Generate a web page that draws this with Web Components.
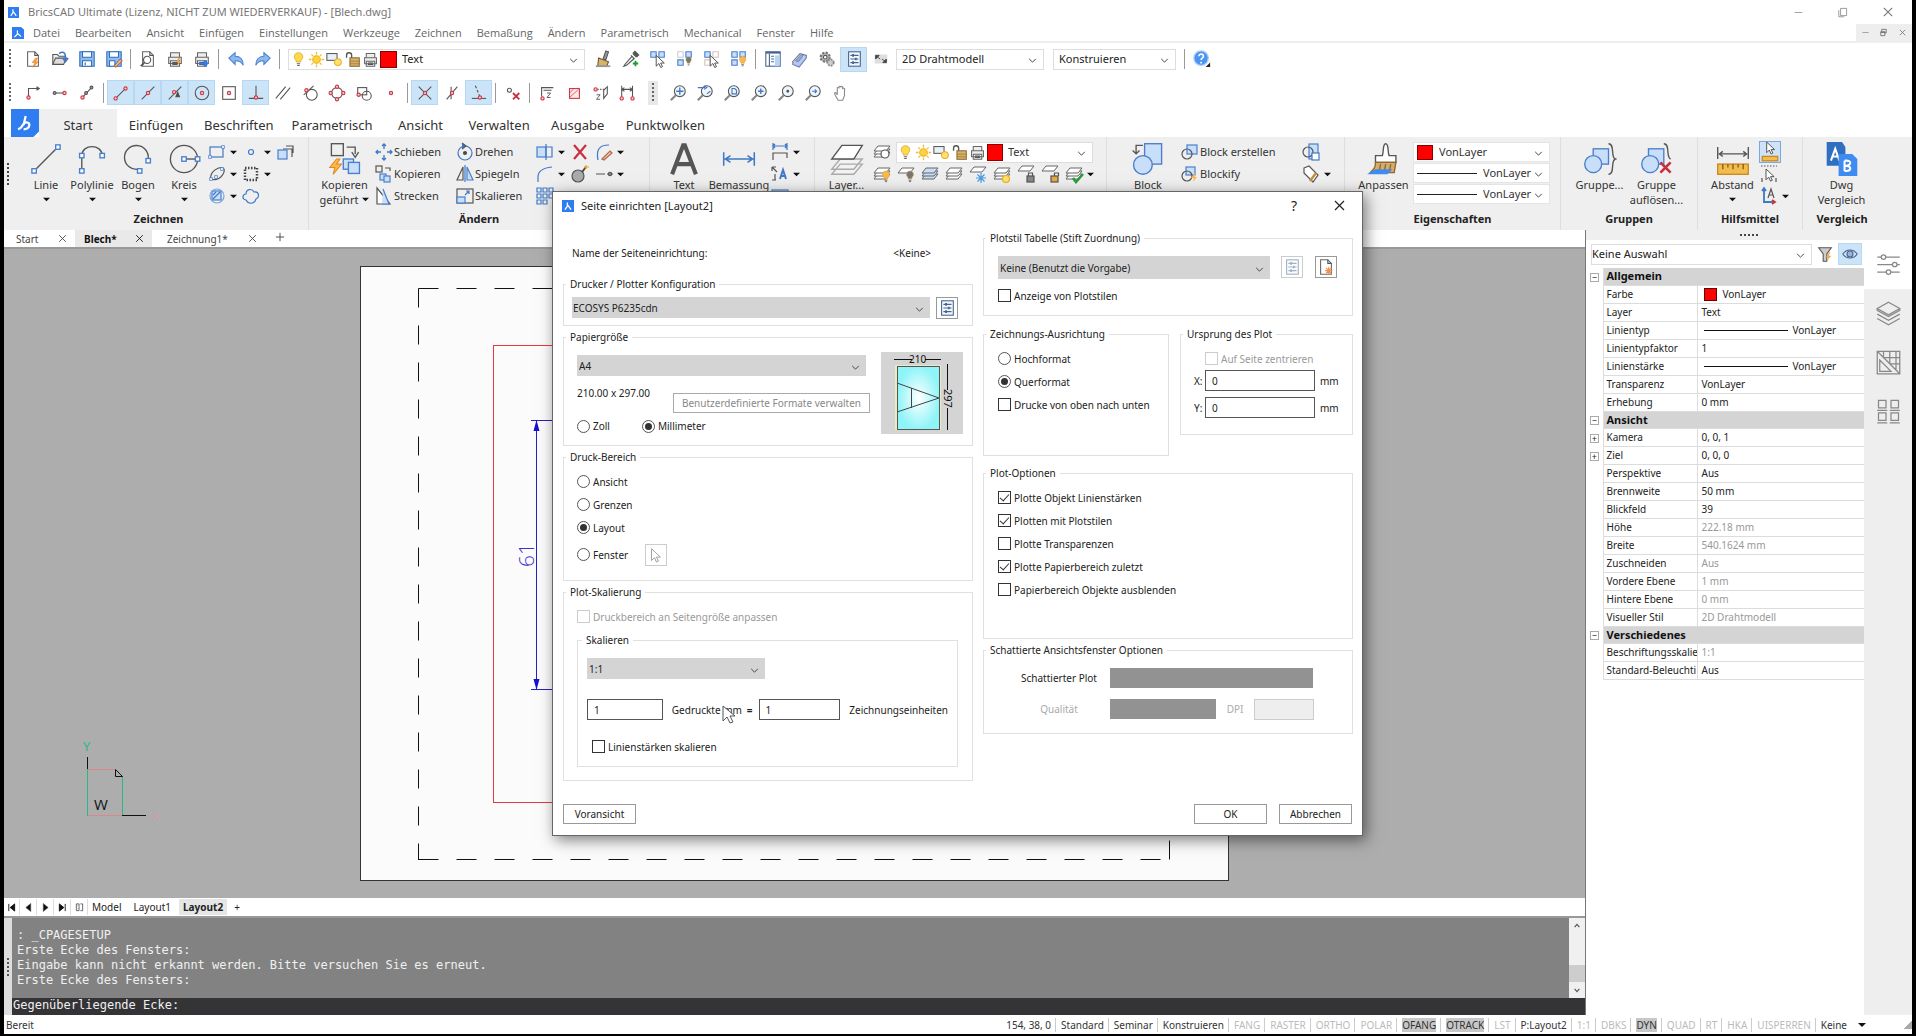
<!DOCTYPE html>
<html lang="de">
<head>
<meta charset="utf-8">
<title>BricsCAD Ultimate - [Blech.dwg]</title>
<style>
html,body{margin:0;height:100%;background:#000;overflow:hidden}
body{font:10px/14px "Noto Sans","Open Sans",sans-serif;color:#222}
</style>
</head>
<body>
<cad-app></cad-app>
<script>
/* ---------- icon set, drawn on a 20 x 20 grid ---------- */
const N=(x,y,r=1.8)=>`<circle cx="${x}" cy="${y}" r="${r}" fill="#f7d0d3" stroke="#cf3a48" stroke-width="1.3"/>`;
const NG=(x,y)=>`<circle cx="${x}" cy="${y}" r="1.6" fill="#999" stroke="#555"/>`;
const Q=(x,y)=>`<rect x="${x-1.3}" y="${y-1.3}" width="2.6" height="2.6" fill="#fff" stroke="#4a7fcc" stroke-width=".8"/>`;
const P=(d,a='')=>`<path d="${d}" ${a}/>`;
const B='stroke="#3f78c6"',BF='stroke="#4a7fcc" fill="#c9def8"';
const BULB=(x,y,c='#ffd94a',k=1)=>`<g transform="translate(${x} ${y}) scale(${k})"><path d="M0-7c-3 0-5 2-5 5 0 2.500 2.500 3.500 2.500 6h5C2.500 1.500 5 .5 5-2c0-3-2-5-5-5z" fill="${c}" stroke="#c9a227" stroke-width=".8"/><path d="M-2 6h4M-1.500 8h3" stroke="#666" stroke-width="1.300"/></g>`;
const SHEET=(y,f='#fff')=>`<path d="M6 ${y}h12l-4 5H2z" fill="${f}" stroke="#666" stroke-width="1"/>`;
const LAY=SHEET(10)+SHEET(7)+SHEET(4);
const PRN=P('M5 8V3h10v5M3 8h14v7H3zM5 12h10v6H5z','fill="#eee" stroke="#666"')+P('M7 14h6M7 16h6');
const MAG=i=>`<circle cx="12" cy="8" r="6" fill="#eef5fd"/>`+P('M7.500 12.500L2 18','stroke-width="2.400" stroke="#888"')+i;
const CUR=(x,y,s=1)=>`<path transform="translate(${x} ${y}) scale(${s})" d="M0 0v12l3-3 2 4.500 2-1L5 8.500h4z" fill="#fff" stroke="#444" stroke-width="1"/>`;
const LOGO='<rect width="20" height="20" fill="#2f7df0" stroke="none"/><path d="M9 4v6l-4 6M10 9l5 7" stroke="#fff" stroke-width="2.200" fill="none"/>';
const PAGE='<path d="M4 2h8l4 4v12H4z" fill="#fff" stroke="#666"/><path d="M12 2v4h4"/>';
const I={
logo:LOGO,
logotab:'<path d="M0 0h20v16l-4 4H0z" fill="#2f7df0" stroke="none"/><path d="M10.500 5L9 11.500M9 10.500c-1 2-2.500 3.500-4 4M9.500 10c2-1 4 0 3.500 2s-2.500 2.500-4 2.500" stroke="#fff" stroke-width="1.600"/>',
logodoc:'<path d="M0 0h15l5 4v16H0z" fill="#2f7df0" stroke="none"/><path d="M9 6v6l-5 5M10 11l5 5" stroke="#fff" stroke-width="2"/>',
new:PAGE+P('M13 9l-4 5h3l-2 5 6-6h-3l2-4z','fill="#f8a13c" stroke="#e07f1c" stroke-width=".6"'),
open:P('M2 16V5h5l2 2h7v3','fill="#eee"')+P('M2 16l3-7h12l-3 7z','fill="#ddd"')+P('M9 4c4-3 7-1 7 3v4M13 9l3 4 3-4','stroke="#3f78c6" stroke-width="1.800"'),
save:'<path d="M2 2h16v16H2z" fill="#8fbdf2" stroke="#2f6fc0"/><path d="M5 2h10v6H5z" fill="#fff" stroke="#2f6fc0"/><path d="M5 12h10v6H5z" fill="#fff" stroke="#2f6fc0"/><path d="M8 14v3"/>',
saveas:'<path d="M2 2h16v16H2z" fill="#8fbdf2" stroke="#2f6fc0"/><path d="M5 2h10v6H5z" fill="#fff" stroke="#2f6fc0"/><path d="M5 12h6v6H5z" fill="#fff" stroke="#2f6fc0"/><path d="M10 18l7-8 2 2-7 7z" fill="#ffd070" stroke="#a66"/>',
preview:PAGE+'<circle cx="9" cy="11" r="4" fill="#fff"/>'+P('M6 14l-4 4','stroke-width="2"'),
print:PRN+P('M14 9l-3 4h3l-2 5 5-6h-3l2-3z','fill="#f8a13c" stroke="none"'),
publish:PRN+P('M7 15h8M12 12l4 3-4 3','stroke="#2f7df0" stroke-width="2"'),
undo:P('M2 9l7-6v4c6 0 9 4 9 10-2-4-5-5-9-5v4z','fill="#8db8f0" stroke="#4a7fcc"'),
redo:P('M18 9l-7-6v4c-6 0-9 4-9 10 2-4 5-5 9-5v4z','fill="#8db8f0" stroke="#4a7fcc"'),
bulb:BULB(10,9),
sun:'<circle cx="10" cy="10" r="4.500" fill="#ffd23c" stroke="#e8b020"/>'+P('M10 1v3M10 16v3M1 10h3M16 10h3M4 4l2 2M14 14l2 2M16 4l-2 2M6 14l-2 2','stroke="#f2bc2c" stroke-width="1.500"'),
vpsun:'<rect x="1" y="3" width="12" height="8" fill="#e8f0fa"/><circle cx="14" cy="13" r="4" fill="#ffe070" stroke="#e8b020"/>',
unlock:P('M3 8V5c0-4 6-4 6 0v4','stroke-width="1.600"')+'<rect x="7" y="8" width="11" height="10" fill="#d8b068" stroke="#8a6a30"/>'+P('M7 12h11M7 15h11','stroke="#8a6a30" stroke-width=".7"'),
printer:PRN,
brush:P('M12 1l3 1-3 9-3-1z','fill="#999"')+P('M4 9l11 4-2 5H3z','fill="#d8b46a" stroke="#6b5730"')+P('M1 18h16','stroke="#999" stroke-width="2"'),
pipette:P('M12 4l4 4M10 6l4 4M11 7l-7 8-2 3 3-1 8-7','fill="#eee"')+P('M13 2l5 5','stroke-width="4" stroke="#555"')+P('M15 12v6M12 15h6','stroke="#1e9a32" stroke-width="2"'),
sel1:'<path d="M2 2h6v6H2zM11 2h6v6h-6z" '+BF+'/>'+CUR(8,6),
sel2:'<path d="M2 2h6v6H2z" stroke="#ccc"/><path d="M11 2h6v6h-6zM2 11h6v6H2z" '+BF+'/>'+BULB(14,12,'#777',.6),
sel3:'<path d="M2 2h6v6H2z" '+BF+'/><path d="M11 2h6v6h-6zM2 11h6v6H2z" stroke="#d9c0c0"/>'+CUR(8,6),
sel4:'<path d="M2 2h6v6H2zM11 2h6v6h-6zM2 11h6v6H2z" '+BF+'/>'+BULB(14,12,'#ffb648',.7),
table:'<rect x="2" y="2" width="16" height="16" fill="#fff" stroke="#47648f"/><path d="M2 3h16" stroke="#47648f" stroke-width="2"/><path d="M6 4v14M8 7h3M8 10h3M8 13h3" stroke="#47648f"/><path d="M12 6h5v12h-5z" fill="#b8d4f4" stroke="none"/>',
clip:P('M2 13l8-9 7 2-8 10z','fill="#f4f6fb" stroke="#777"')+P('M2 13v3l7 3 8-10V6','fill="#b9c8ea" stroke="#6a7fb8"')+P('M5 12l6-7 3 1-6 7z','fill="#8ea8e0" stroke="#5a73b8" stroke-width=".8"'),
gear:'<circle cx="8" cy="8" r="5" fill="#bbb" stroke="#777" stroke-width="2.500" stroke-dasharray="2.500 1.400"/><circle cx="8" cy="8" r="2" fill="#fff"/><circle cx="14" cy="14" r="3.500" fill="#ccc" stroke="#888" stroke-width="2" stroke-dasharray="2 1.200"/>',
props:'<rect x="4" y="2" width="13" height="16" fill="#f4f8fd" stroke="#47648f"/>'+P('M6 6h9M6 10h9M6 14h9','stroke="#47648f"')+P('M9 4.500v3M12 8.500v3M9 12.500v3','stroke="#47648f" stroke-width="2"'),
arrows:'<rect x="3" y="5" width="14" height="10" fill="#ddd" stroke="none"/>'+P('M4 6l4 0-4 4zM5 7l4 3','fill="#444" stroke="#444" stroke-width="1"')+P('M16 14h-4l4-4zM15 13l-4-3','fill="#444" stroke="#444" stroke-width="1"'),
help:'<circle cx="9" cy="9" r="8" fill="#4a94f2" stroke="#a9ccf8" stroke-width="1.500"/><path d="M6.500 7c0-3.500 5.500-3 5 0 0 2-2.500 2-2.500 4M9 13v2" stroke="#fff" stroke-width="1.800"/><path d="M14 19h5v-5z" fill="#222" stroke="none"/>',
e1:P('M5 14V5h11')+N(5,15)+P('M14 3l3 2-3 2','fill="#555"'), e2:P('M4 10h12')+NG(4,10)+N(15,10), e3:P('M4 16L15 4')+NG(15,4)+NG(9,10)+N(5,15),
s1:P('M4 16L16 4')+N(4,16)+N(15,5), s2:P('M3 17L17 3')+N(10,10), s3:P('M3 17L17 3')+N(9,9)+P('M13 9l-2 5h4z','fill="#444"'),
s4:'<circle cx="10" cy="10" r="7.500"/>'+N(10,10), s5:'<rect x="3" y="3" width="14" height="14"/>'+N(10,10), s6:P('M10 2v13M2 16h16')+N(10,15),
s7:P('M2 16L13 3M7 17L18 4'), s8:'<circle cx="12" cy="12" r="6"/>'+P('M3 12L14 2')+N(6,7), s9:'<circle cx="10" cy="10" r="6"/>'+N(10,3)+N(10,17)+N(3,10)+N(17,10),
s10:'<rect x="3" y="4" width="10" height="8"/><circle cx="13" cy="13" r="5"/>'+N(4,12), s11:N(10,10),
s12:P('M3 3l14 14M3 17L17 3')+N(10,10), s13:P('M4 17L16 3M9 3v14')+N(10,10), s14:P('M6 2l5 12','stroke-dasharray="3 2"')+P('M2 16h16')+N(11,15),
s15:'<circle cx="6" cy="7" r="2.200"/>'+P('M10 10l7 7M17 10l-7 7','stroke="#c8303e" stroke-width="2"'),
s16:P('M4 14V4h13M6 7h9')+'<path d="M10 10h4l-4 5h4" stroke-width="1"/>'+N(5,16), s17:'<rect x="5" y="5" width="11" height="11" stroke="#cf3a48" fill="#fbe6e8"/>'+P('M5 15l10-9M5 10l5-5','stroke="#cf3a48" stroke-width=".8"'),
s18:P('M6 6h9','stroke-dasharray="1.500 1.500"')+P('M17 3v8l-4 5V7z')+'<path d="M5 12h4l-4 5h4" stroke-width="1"/>'+N(4,6), s19:P('M3 2v13M15 2v13M3 6h12M6 4L3 6l3 2M12 4l3 2-3 2')+N(3,16)+N(15,16),
z1:MAG(P('M12 4v8M8 8h8',B+' stroke-width="1.500"')), z2:MAG(P('M2 4h8M9 2l3 2-3 2M12 11l4-3','stroke="#3f78c6"')), z3:MAG(P('M10 5h3l2 2v4h-5z',B)), z4:MAG(P('M12 5v6M9 8h6',B+' stroke-width="1.500"')), z5:MAG('<circle cx="12" cy="8" r="1" fill="#333"/>'), z6:MAG(P('M9 8h5M12 6l2 2-2 2',B)),
hand:P('M6 18c-2-3-4-6-4-8 1-1 2 0 3 2V4c1-1 2 0 2 1V3c1-1 2 0 2 1V3c1-1 2 0 2 1v1c1-1 3 0 2 2v6l-2 5z','transform="translate(2 0)" fill="#fff" stroke="#888"'),
line:P('M3 17L17 3')+Q(3,17)+Q(17,3), poly:P('M4 17V8c0-7 12-7 12 0')+Q(4,17)+Q(4,8)+Q(16,8), arc:P('M10 16A7 7 0 1 1 16 10')+Q(11,17)+Q(16,11), circ:'<circle cx="10" cy="10" r="8"/>'+P('M10 10h8')+Q(10,10)+Q(18,10),
rect:'<rect x="3" y="5" width="13" height="10" '+B+'/>'+Q(3,15)+Q(16,5), pt:'<circle cx="10" cy="10" r="2.500" '+B+'/>', ext:P('M8 7h9v8M11 4h7v7')+'<rect x="3" y="8" width="9" height="9" '+BF+'/>',
spl:P('M4 15C2 8 12 2 16 4s-2 14-12 11z')+Q(4,15)+Q(15,5)+Q(9,13), wipe:P('M4 4h12v12H4z','stroke-width="2.500" stroke-dasharray="1.500 1.500" stroke="#444"'), hatch:'<rect x="5" y="5" width="9" height="9" '+BF+'/><circle cx="10" cy="10" r="7" stroke="#7aa4dd"/>'+P('M6 13l7-7M6 9l3-3',B), cloud:P('M5 14c-5-1-3-6 0-6 0-5 6-6 8-2 5-1 6 5 2 7-2 6-8 5-10 1z',B),
copyg:'<rect x="2" y="1" width="7" height="7"/>'+P('M11 3h5v4M14 6l2 3 2-3')+P('M5 10l-4 5h3l-1 4 5-6H5l2-3z','fill="#ffb648" stroke="#e08a20" stroke-width=".6"')+'<rect x="9" y="10" width="6" height="6" '+BF+'/><rect x="12" y="12" width="6.500" height="6.500" '+BF+'/>',
move:P('M10 2v5M10 13v5M2 10h5M13 10h5M8 4l2-2 2 2M8 16l2 2 2-2M4 8l-2 2 2 2M16 8l2 2-2 2',B+' stroke-width="1.300"'), copy:'<rect x="2" y="2" width="6" height="6"/>'+P('M11 4h5v3')+'<rect x="6" y="10" width="6" height="6" '+BF+'/><rect x="10" y="12" width="6" height="6" '+BF+'/>', stretch:P('M3 2v16h13z','fill="#fff"')+P('M9 3l6 15H8','fill="#c9def8" stroke="#4a7fcc"'),
rot:'<circle cx="10" cy="11" r="7" '+B+'/>'+P('M7 1l4 3-4 3','fill="#3f78c6"')+'<circle cx="10" cy="11" r="1.500" fill="#444"/>', mir:P('M8 3v13H2z')+P('M12 3v13h6z',BF)+P('M10 1v17',B), scale:'<rect x="2" y="3" width="16" height="14"/><rect x="2" y="11" width="8" height="6" '+BF+'/>'+P('M10 9l4-4M11 5h3v3',B),
trim:'<rect x="2" y="5" width="9" height="10" '+BF+'/>'+P('M11 2v16M11 5h6v10h-6',B), del:P('M4 3l12 14M16 3L4 17','stroke="#c8303e" stroke-width="2.200"'), pedit:P('M4 18C2 8 5 3 15 3',B)+P('M8 17l8-8 2 2-8 7z','fill="#ffd070" stroke="#a66"'), fillet:P('M3 18V13c0-6 4-9 14-10',B), bomb:'<circle cx="8" cy="12" r="6" fill="#aaa"/>'+P('M12 8l4-5','stroke="#444" stroke-width="2"')+P('M14 3h5M16 1v4','stroke="#f0a020"'), brk:P('M2 10h9M13 10h2M17 10h2')+NG(16,10), arr:P('M2 2h4v4H2zM8 2h4v4H8zM14 2h4v4h-4zM2 8h4v4H2zM8 8h4v4H8zM14 8h4v4h-4zM2 14h4v4H2zM8 14h4v4H8z',B),
A:P('M3 19L9.500 2h1L17 19M5.500 13h9','stroke="#555" stroke-width="2.400"'), dim:P('M1 6v8M19 6v8M2 10h16M5 8l-3 2 3 2M15 8l3 2-3 2',B+' stroke-width=".9"'), dim2:P('M3 1v7M17 1v7M3 4h14M5 2L3 4l2 2M15 2l2 2-2 2',B)+P('M3 18v-7h14v5'), lead:P('M2 3h4M2 3v4M2 3l5 5M2 16h4M5 10v6')+P('M10 15l3-9 3 9M11 12h4','stroke="#3f78c6" stroke-width="2"'), tbl:'<rect x="2" y="4" width="16" height="12" '+BF+'/>',
layers:P('M6 10h13l-5 6H1zM6 13h13l-5 6H1z','stroke="#aaa" fill="#f2f2f2"')+P('M7 2h12l-5 8H1z','fill="#fff"'),
lay1:LAY+'<circle cx="13" cy="12" r="4" fill="#fff"/>', lay2:LAY+BULB(14,12,'#ffb648',.7), lay3:SHEET(4)+BULB(14,12,'#777',.7), lay4:SHEET(10,'#c9def8')+SHEET(7,'#c9def8')+SHEET(4,'#c9def8'), lay5:LAY, lay6:SHEET(3)+P('M13 9v10M8 14h10M9.500 10.500l7 7M16.500 10.500l-7 7','stroke="#4a9be6"'), lay7:LAY+'<circle cx="14" cy="15" r="3.500" fill="#ffe070" stroke="#e8b020"/>', lay8:SHEET(2)+'<rect x="11" y="12" width="7" height="6" fill="#888"/>'+P('M12.500 12v-3h4v3'), lay9:SHEET(2)+'<rect x="11" y="12" width="7" height="6" fill="#e8a840"/>'+P('M14.500 12v-3h4v3'), lay10:LAY+P('M9 14l3 4 7-8','stroke="#2f9a3c" stroke-width="2.600"'),
block:'<rect x="8" y="1" width="10" height="12" '+BF+'/><circle cx="7" cy="13.500" r="5.500" '+BF+'/>'+P('M7 2H3v5M1 5l2 2 2-2'), blk1:'<rect x="7" y="3" width="10" height="9" '+BF+'/><circle cx="7" cy="12" r="5"/>', blk2:'<rect x="6" y="3" width="9" height="8" '+BF+'/><circle cx="7" cy="12" r="5"/>'+P('M15 9l-4 5h3l-1 4 4-5h-2z','fill="#ffb648" stroke="none"'), blk3:'<rect x="8" y="2" width="9" height="15" '+BF+'/><circle cx="7" cy="10" r="5"/><rect x="11" y="11" width="7" height="7" fill="#fff" '+B+'/>', tag:P('M3 4l5-2 9 9-5 7-9-9z','fill="#fff"')+P('M9 17l6-8','stroke="#c89040" stroke-width="2.500"'),
bigbrush:P('M11 1c2 0 1 5 2 7h4v4H5V8h4c1-2 0-7 2-7z','fill="#fff"')+P('M5 12h12l-1 6H2c2-2 3-3 3-6z','fill="#d8ab68" stroke="#8a6a30"')+P('M7 18l1-5M10 18l1-5M13 18l1-5','stroke="#8a6a30" stroke-width=".8"')+P('M0 19h12l3-3H5z','fill="#3f8cf0" stroke="none"'),
grp:'<rect x="6" y="4" width="9" height="9" '+BF+'/><circle cx="6" cy="13" r="5" '+BF+'/>'+P('M15 1c4 0 1 8 4 9-3 1 0 9-4 9'), grpx:'<rect x="5" y="4" width="9" height="9" '+BF+'/><circle cx="6" cy="13" r="5" '+BF+'/>'+P('M14 1c4 0 1 8 4 9')+P('M12 12l6 6M18 12l-6 6','stroke="#c8303e" stroke-width="1.600"'),
dist:P('M1 3v7M19 3v7M2 7h16M4 5.500L2 7l2 1.500M16 5.500L18 7l-2 1.500','stroke-width=".8"')+'<rect x="1" y="13" width="18" height="6" fill="#f2bd4e" stroke="#c98a20"/>'+P('M4 13v3M7 13v2M10 13v3M13 13v2M16 13v3','stroke="#7a5510" stroke-width=".7"'), mcur:CUR(7,1,.8)+'<rect x="3" y="14" width="14" height="4" fill="#f2bd4e" stroke="#c98a20"/>', scur:P('M2 2h16','stroke-dasharray="1.500 1.500"')+CUR(7,5,.9)+P('M3 14v4M17 14v4'), ucs:P('M5 3v13h10M3 5l2-3 2 3',B+' stroke-width="1.800"')+P('M13 14l3 2-3 2','stroke="#c33" stroke-width="1.800"')+P('M9 12l3-9 3 9M10 9h4'),
dwg:'<path d="M1 0h9l2 3v11H1z" fill="#2f6fc0" stroke="none"/><path d="M3.500 11L6 4l2.500 7M4.500 8.500h3" stroke="#fff" stroke-width="1.200"/><path d="M8 7h8l3 3v10H8z" fill="#3f8cf0" stroke="none"/><path d="M11.500 11v6M11.500 11c5-.5 4 3 0 3 5 0 4 3.500 0 3" stroke="#fff" stroke-width="1.200"/>',
filter:P('M3 3h14l-5 7v8H8v-8z','fill="#ccc"')+P('M15 8l-4 5h3l-2 5 5-6h-3l2-4z','fill="#f8a13c" stroke="none"'), eye:P('M2 10c4-6 12-6 16 0-4 6-12 6-16 0z','stroke="#47648f"')+'<circle cx="10" cy="10" r="3.300" fill="#9db4d6" stroke="#47648f"/>',
sliders:P('M1 4h18M1 10h18M1 16h18','stroke="#888" stroke-width="1"')+'<g fill="#fff" stroke="#888" stroke-width="1"><circle cx="6" cy="4" r="1.800"/><circle cx="15" cy="10" r="1.800"/><circle cx="10" cy="16" r="1.800"/></g>',
stack:'<g stroke="#888" stroke-width="1"><path d="M1 14l9 5 9-5M1 10.500l9 5 9-5M10 1l9 5-9 5-9-5zM1 6v1.500l9 5 9-5V6"/></g>', plan:'<g stroke="#888" stroke-width="1"><path d="M1 1h18v18H1zM1 1l18 18M3 8v9h9zM6 1v5M11 1v10M16 1v15M6 6h13M11 11h8"/></g>', comps:'<g stroke="#888" stroke-width="1"><path d="M2 1h6v6H2zM12 1h6v6h-6zM2 11h6v6H2zM12 11h6v6h-6zM1 9h8M11 9h8M1 19h8M11 19h8"/></g>',
pageplus:PAGE+P('M13 10v8M9 14h8M10 11l6 6M16 11l-6 6','stroke="#f09050" stroke-width="1.300"'), curs:CUR(5,3,1.1),
chev:P('M4 7l6 6 6-6','stroke="#444" stroke-width="1.800"'), tri:P('M0 5h20L10 15z','fill="#111" stroke="none"'), x:P('M4 4l12 12M16 4L4 16','stroke="currentColor" stroke-width="1.600"'), minus:P('M3 10h14','stroke="currentColor"'), max:P('M6 4h10v12h-10zM3 7v11h9','stroke="currentColor"'), rest:P('M6 7V3h10v8h-4M4 8h9v9H4zM4 10h9','stroke="currentColor" stroke-width="1.800"'), plus:P('M10 3v14M3 10h14','stroke="currentColor" stroke-width="1.500"'),
first:P('M4 2v16M17 2v16l-10-8z','fill="#111" stroke="#111" stroke-width="2"'), prev:P('M15 1v18L4 10z','fill="#111"'), next:P('M5 1v18l11-9z','fill="#111"'), last:P('M16 2v16M3 2v16l10-8z','fill="#111" stroke="#111" stroke-width="2"'), list:P('M3 2h6v15H3zM12 2h5v15h-5M6 6h1M6 12h1','stroke="#333" stroke-width="1.600"'),
up:P('M4 13l6-7 6 7','stroke="#555" stroke-width="3"'), down:P('M4 7l6 7 6-7','stroke="#555" stroke-width="3"')
};
function def(name,css,html){customElements.define(name,class extends HTMLElement{
 constructor(){super();this.attachShadow({mode:'open'})}
 connectedCallback(){if(!this.shadowRoot.firstChild)this.shadowRoot.innerHTML=`<style>*,:host{box-sizing:border-box}button,input,select{font:inherit;color:inherit;margin:0}${css}</style>`+(typeof html==='function'?html(this):html)}
})}
const ic=(n,s=20)=>`<cad-icon n="${n}" s="${s}"></cad-icon>`;

def('cad-icon',':host{display:inline-block;flex:none;line-height:0}',e=>{const s=e.getAttribute('s')||20;return `<svg width="${s}" height="${s}" viewBox="0 0 20 20" fill="none" stroke="#555" stroke-width="${s>30?.8:s>24?1:1.2}" aria-hidden="true">${I[e.getAttribute('n')]||''}</svg>`});

/* tool button of the classic toolbars */
def('tool-button',':host{display:block;flex:none;width:27px;height:25px}button{width:100%;height:100%;border:0;padding:0;background:none;display:grid;place-items:center}:host([on]) button{background:#cce4f7;box-shadow:inset 0 0 0 1px #b7d8f2}',e=>`<button aria-label="${e.getAttribute('n')}">${ic(e.getAttribute('n'),e.getAttribute('s')||18)}</button>`);
def('tool-sep',':host{display:block;flex:none;width:7px;height:20px}div{width:1px;height:100%;margin:0 3px;background:#999}','<div></div>');
def('tool-grip',':host{display:block;flex:none;width:10px;height:24px}div{width:2px;height:20px;margin:2px 4px;background:repeating-linear-gradient(#666 0 2px,transparent 2px 4px)}','<div></div>');

/* drop-down box */
def('cad-select',`:host{display:block;position:relative;height:21px;background:#fff;border:1px solid #ddd}
.w{display:flex;align-items:center;height:100%;padding-left:var(--pl,5px)}slot{display:contents}
select{flex:1;min-width:0;width:0;height:100%;border:0;background:none;appearance:none;padding:0 var(--pr,20px) 0 var(--ti,0px);opacity:1;color:inherit}
cad-icon{position:absolute;right:5px;top:50%;margin-top:-4px;pointer-events:none}
:host([gray]){background:#d4d4d4;border:0}:host([dark]){background:#929292;border:0}:host([dark]) cad-icon{display:none}`,
e=>`<div class="w"><slot></slot><select aria-label="${e.getAttribute('label')}" ${e.hasAttribute('dark')?'disabled':''}><option>${e.getAttribute('value')||''}</option></select></div>${ic('chev',11)}`);

/* radio and tick box with label */
def('cad-check',`:host{display:flex;align-items:center;height:23px}label{display:flex;align-items:center;gap:3px;white-space:nowrap}
input{appearance:none;width:13px;height:13px;border:1px solid #333;background:#fff;display:grid;place-items:center}
input[type=radio]{border-radius:50%;border-color:#555}input[type=radio]:checked::before{content:"";width:7px;height:7px;border-radius:50%;background:#333}
input[type=checkbox]:checked::before{content:"";width:8px;height:4px;border:solid #333;border-width:0 0 1px 1px;transform:rotate(-48deg);margin-top:-3px}
:host([disabled]) label{color:#999}:host([disabled]) input{border-color:#ccc}`,
e=>`<label><input type="${e.getAttribute('type')||'checkbox'}" ${e.hasAttribute('checked')?'checked':''} ${e.hasAttribute('disabled')?'disabled':''}><span>${e.getAttribute('label')}</span></label>`);

def('group-box',`:host{display:block}fieldset{margin:0;min-width:0;border:1px solid #e0e0e0;padding:0}legend{height:14px;line-height:14px;margin-left:var(--lm,2px);padding:0 4px}
.b{display:flex;flex-direction:column;padding:var(--pad,0)}`,e=>`<fieldset><legend>${e.getAttribute('label')}</legend><div class="b"><slot></slot></div></fieldset>`);

def('title-bar',`:host{display:flex;height:24px;align-items:center;padding:0 6px 0 4px;gap:9px;background:#fff;color:#777;font-size:11px}span{flex:1}button{border:0;background:none;padding:0;width:36px;display:grid;place-items:center}`,
`${ic('logo',11)}<span>BricsCAD Ultimate (Lizenz, NICHT ZUM WIEDERVERKAUF) - [Blech.dwg]</span><button aria-label="Minimieren">${ic('minus',11)}</button><button aria-label="Wiederherstellen">${ic('max',12)}</button><button aria-label="Schließen">${ic('x',14)}</button>`);

def('menu-bar',`:host{display:flex;height:19px;align-items:center;background:#fff;border-bottom:2px solid #eee;color:#666;font-size:11px;font-family:"Open Sans",sans-serif;padding-left:8px}
nav{display:flex;gap:15px;flex:1;padding-left:9px}a{color:inherit;text-decoration:none}div{display:flex;background:#eee;height:17px;width:56px;justify-content:space-around;align-items:center}button{border:0;background:none;padding:0;line-height:0}`,
`${ic('logodoc',12)}<nav>${['Datei','Bearbeiten','Ansicht','Einfügen','Einstellungen','Werkzeuge','Zeichnen','Bemaßung','Ändern','Parametrisch','Mechanical','Fenster','Hilfe'].map(t=>`<a href="#">${t}</a>`).join('')}</nav><div>${['minus','rest','x'].map(n=>`<button aria-label="${n}">${ic(n,9)}</button>`).join('')}</div>`);

const tb=(l,on=[])=>l.map(n=>`<tool-button n="${n}" ${on.includes(n)?'on':''}></tool-button>`).join('');
const layerIcons=()=>`<span class="li">${['bulb','sun','vpsun','unlock','printer'].map(n=>ic(n,17)).join('')}<i></i></span>`;
const liCss='.li{display:flex;align-items:center}.li i{width:17px;height:17px;background:#f00;border:1px solid #800;box-sizing:border-box}';
def('tool-bars',`:host{display:block;background:#fff;font-size:11px}.r{display:flex;align-items:center;height:34px;padding:1px 0 0 1px}.a{height:32px;padding-top:0}tool-grip{margin:0 0 0 0;width:14px}
.mid{margin:0 6px 0 7px;width:10px;background:#e8e8e8}.l{width:297px;margin:0 5px;--ti:5px;--pl:1px}.v{width:148px;margin:0 9px 0 2px}.k{width:123px;margin-right:5px}${liCss}.li{gap:1px}`,
`<div class="r a"><tool-grip></tool-grip>${tb(['new','open','save','saveas'])}<tool-sep></tool-sep>${tb(['preview','print','publish'])}<tool-sep></tool-sep>${tb(['undo','redo'])}<tool-sep></tool-sep>
<cad-select class="l" label="Layer" value="Text">${layerIcons()}</cad-select>${tb(['brush','pipette','sel1','sel2','sel3','sel4'])}<tool-sep></tool-sep>${tb(['table','clip','gear','props','arrows'],['props'])}
<cad-select class="v" label="Visueller Stil" value="2D Drahtmodell"></cad-select><cad-select class="k" label="Arbeitsbereich" value="Konstruieren"></cad-select><tool-sep></tool-sep>${tb(['help'])}</div>
<div class="r"><tool-grip></tool-grip>${tb(['e1','e2','e3'])}<tool-sep></tool-sep>${tb(['s1','s2','s3','s4','s5','s6','s7','s8','s9','s10','s11'],['s1','s2','s3','s4','s6'])}<tool-sep></tool-sep>${tb(['s12','s13','s14'],['s12','s14'])}<tool-sep></tool-sep>${tb(['s15'])}<tool-sep></tool-sep>${tb(['s16','s17','s18','s19'])}<tool-grip class="mid"></tool-grip>${tb(['z1','z2','z3','z4','z5','z6','hand'])}</div>`);

/* ribbon */
def('ribbon-tabs',`:host{display:flex;height:28px;background:#fff;padding-left:7px;font-size:13px;align-items:stretch;color:#333}button{border:0;background:none;min-width:78px;padding:3px 9px 0}.on{background:#efefef}`,
`${ic('logotab',28)}${['Start','Einfügen','Beschriften','Parametrisch','Ansicht','Verwalten','Ausgabe','Punktwolken'].map((t,i)=>`<button class="${i?'':'on'}">${t}</button>`).join('')}`);
def('ribbon-group',`:host{display:flex;flex-direction:column;flex:none;border-right:1px solid #dedede}.b{display:flex;height:71px;padding:4px 0 0 var(--pl,0)}h3{margin:0;font:bold 11px/22px "Noto Sans",sans-serif;text-align:center;color:#222}`,e=>`<div class="b"><slot></slot></div><h3>${e.getAttribute('label')||'&nbsp;'}</h3>`);
def('ribbon-big',`:host{display:block;flex:none;width:46px}button{border:0;background:none;padding:1px 0 0;width:100%;height:66px;display:flex;flex-direction:column;align-items:center;line-height:15px;white-space:nowrap}button>cad-icon{height:35px}span{display:flex;align-items:center;gap:4px;height:15px}`,
e=>{const s=e.getAttribute('sub')||'',a=e.hasAttribute('arrow');return `<button>${ic(e.getAttribute('n'),34)}<span>${e.getAttribute('label')}</span><span>${s}${a?ic('tri',7):''}</span></button>`});
def('ribbon-cell',`:host{display:flex;align-items:center;height:22px}button{border:0;background:none;padding:0;display:flex;align-items:center;height:22px;white-space:nowrap}.t{margin-left:3px}:host([on]) button{background:#cfe2f8;box-shadow:inset 0 0 0 1px #7aa8e0}`,
e=>`<button aria-label="${e.getAttribute('label')||e.getAttribute('n')}">${ic(e.getAttribute('n'),e.getAttribute('s')||20)}${e.hasAttribute('label')?`<span>${e.getAttribute('label')}</span>`:''}</button>${e.hasAttribute('arrow')?`<cad-icon class="t" n="tri" s="7"></cad-icon>`:''}`);
const c=(n,l,a)=>`<ribbon-cell n="${n}" ${l?`label="${l}"`:''} ${a?'arrow':''}></ribbon-cell>`;
def('ribbon-bar',`:host{display:flex;height:93px;background:#efefef;font-size:11px;color:#333}.grip{width:2px;height:22px;margin:26px 0 0 3px;background:repeating-linear-gradient(#444 0 2px,transparent 2px 4px);flex:none}
.g{display:grid;grid-auto-rows:22px;align-content:start;flex:none}ribbon-group.z{width:300px;--pl:14px}.z .g{grid-template-columns:34px 34px 22px}
.ae{width:341px;--pl:6px}.ae .g1{grid-template-columns:81px 80px}.ae .g2{grid-template-columns:35px 24px 34px}
.be{width:165px;--pl:10px}.ly{width:292px;--pl:6px}.ly .row{display:flex;height:22px;align-items:center}.ly .row ribbon-cell{width:24px;flex:none}.ly cad-select{width:197px;height:21px;--ti:5px;--pl:0px}
.bl{width:238px;--pl:16px}.bl .g{grid-template-columns:121px 34px;margin-left:7px}
.ei{width:216px;--pl:9px}.ei .s{display:grid;grid-auto-rows:20px;gap:1px;padding-top:1px;width:137px}.ei cad-select{height:20px;border-color:#e4e4e4;--ti:6px;--pl:3px;--pr:4px}.sw{width:16px;height:15px;background:#f00;border:1px solid #800;box-sizing:border-box}.ln{width:60px;height:1px;background:#222}
.gr{width:137px;--pl:10px}.hi{width:105px;--pl:8px}.ve{width:78px;border:0}${liCss}.li{gap:1px}.ly .li i{width:16px}`,
`<div class="grip"></div><ribbon-group class="z" label="Zeichnen"><ribbon-big n="line" label="Linie" arrow></ribbon-big><ribbon-big n="poly" label="Polylinie" arrow></ribbon-big><ribbon-big n="arc" label="Bogen" arrow></ribbon-big><ribbon-big n="circ" label="Kreis" arrow></ribbon-big>
<div class="g">${c('rect','',1)+c('pt','',1)+c('ext')+c('spl','',1)+c('wipe','',1)+'<i></i>'+c('hatch','',1)+c('cloud')}</div></ribbon-group>
<ribbon-group class="ae" label="Ändern"><ribbon-big style="width:59px" n="copyg" label="Kopieren" sub="geführt" arrow></ribbon-big><div class="g g1">${c('move','Schieben')+c('rot','Drehen')+c('copy','Kopieren')+c('mir','Spiegeln')+c('stretch','Strecken')+c('scale','Skalieren')}</div><div class="g g2">${c('trim','',1)+c('del')+c('pedit','',1)+c('fillet','',1)+c('bomb')+c('brk','',1)+c('arr')}</div></ribbon-group>
<ribbon-group class="be"><ribbon-big style="width:48px" n="A" label="Text"></ribbon-big><ribbon-big style="width:62px" n="dim" label="Bemassung"></ribbon-big><div class="g">${c('dim2','',1)+c('lead','',1)+c('tbl')}</div></ribbon-group>
<ribbon-group class="ly"><ribbon-big style="width:51px" n="layers" label="Layer..."></ribbon-big><div><div class="row"><ribbon-cell n="lay1"></ribbon-cell><cad-select label="Layer" value="Text">${layerIcons()}</cad-select></div><div class="row">${[2,3,4,5,6,7,8,9].map(k=>c('lay'+k)).join('')+c('lay10','',1)}</div></div></ribbon-group>
<ribbon-group class="bl"><ribbon-big style="width:50px" n="block" label="Block"></ribbon-big><div class="g">${c('blk1','Block erstellen')+c('blk3')+c('blk2','Blockify')+c('tag','',1)}</div></ribbon-group>
<ribbon-group class="ei" label="Eigenschaften"><ribbon-big style="width:59px" n="bigbrush" label="Anpassen"></ribbon-big><div class="s"><cad-select label="Farbe" value="VonLayer"><span class="sw"></span></cad-select><cad-select label="Linientyp" value="VonLayer"><span class="ln"></span></cad-select><cad-select label="Linienstärke" value="VonLayer"><span class="ln"></span></cad-select></div></ribbon-group>
<ribbon-group class="gr" label="Gruppen"><ribbon-big style="width:57px" n="grp" label="Gruppe..."></ribbon-big><ribbon-big style="width:57px" n="grpx" label="Gruppe" sub="auflösen..."></ribbon-big></ribbon-group>
<ribbon-group class="hi" label="Hilfsmittel"><ribbon-big style="width:53px" n="dist" label="Abstand" arrow></ribbon-big><div class="g"><ribbon-cell n="mcur" s="22" on></ribbon-cell>${c('scur')+c('ucs','',1)}</div></ribbon-group>
<ribbon-group class="ve" label="Vergleich"><ribbon-big style="width:77px" n="dwg" label="Dwg" sub="Vergleich"></ribbon-big></ribbon-group>`);

/* document tabs */
def('doc-tabs',`:host{display:flex;height:19px;background:#fff;border-bottom:2px solid #999;color:#444;align-items:stretch}div{display:flex;align-items:center;padding:0 6px 0 9px}button{border:0;background:none;padding:0}div .x{line-height:0}.on{background:#e9e9e9;color:#111;font-weight:bold}.p{margin-left:10px}`,
`<div style="gap:19px;width:71px;padding-left:12px"><button>Start</button><button class="x" aria-label="Start schließen">${ic('x',11)}</button></div><div class="on" style="gap:17px;width:77px"><button>Blech*</button><button class="x" aria-label="Blech schließen">${ic('x',11)}</button></div><div style="gap:19px;padding-left:15px"><button>Zeichnung1*</button><button class="x" aria-label="Zeichnung1 schließen">${ic('x',11)}</button></div><button class="p" aria-label="Neu">${ic('plus',12)}</button>`);

/* drawing sheet */
def('drawing-canvas',`:host{display:block;flex:1;min-height:0;background:#adadad;overflow:hidden}svg{display:block;width:100%;height:100%}`,
`<svg fill="none"><g transform="translate(-4 -249)"><rect x="360.500" y="266.500" width="868" height="614" fill="#fbfbfb" stroke="#333"/>
<path d="M418.500 288.500H1170M418.500 859.500H1170" stroke="#111" stroke-dasharray="20 18"/><path d="M418.500 288.500V860M1169.500 859.500V288" stroke="#111" stroke-dasharray="19 18"/>
<rect x="493.500" y="345.500" width="600" height="457" stroke="#e8383c"/>
<path d="M531 420.500h60M531 689.500h60M536.500 421v268" stroke="#2820c0"/><path d="M536.500 420l-3 11h6zM536.500 690l-3-11h6z" fill="#1810d0"/>
<text transform="translate(534 567) rotate(-90)" font-family="Open Sans" font-weight="300" font-size="21" fill="#3a30d0">61</text>
<path d="M87.500 757v12M122 815.500h24" stroke="#111"/><path d="M87.500 769v47M122.500 776v39" stroke="#28b888"/><path d="M88 769.500h27M88 815.500h34" stroke="#d88"/><path d="M115.500 769.500v7h7z" stroke="#111"/>
<text x="83" y="751" font-family="Open Sans" font-size="13" fill="#28b888">Y</text><text x="94" y="810" font-family="Open Sans" font-size="15" fill="#111">W</text><text x="152" y="821" font-family="Open Sans" font-size="12" fill="#d29aa6">X</text></g></svg>`);

def('layout-tabs',`:host{display:flex;height:20px;background:#fff;align-items:center;border-bottom:2px solid #999}button{border:0;background:none;padding:0;height:16px}.n{width:17px;border-right:1px solid #ddd;line-height:0}.n:first-of-type{width:16px}.t{padding:0 8px 0 4px}.on{font-weight:bold;background:#e6e6e6;padding:0 4px}.p{margin-left:7px}`,
`${['first','prev','next','last','list'].map(n=>`<button class="n" aria-label="${n}">${ic(n,9)}</button>`).join('')}<button class="t">Model</button><button class="t">Layout1</button><button class="on">Layout2</button><button class="p" aria-label="Neues Layout">+</button>`);

def('command-line',`:host{display:flex;height:97px;background:#ddd;font:12px/15px "DejaVu Sans Mono","Liberation Mono",monospace;color:#f0f0f0}.g{width:8px;flex:none;display:grid;place-items:center}.g i{width:2px;height:18px;background:repeating-linear-gradient(#555 0 2px,transparent 2px 4px)}
.m{flex:1;display:flex;flex-direction:column}.h{flex:1;display:flex}pre{flex:1;margin:0;background:#828282;font:inherit;padding:10px 5px}.sb{width:16px;background:#f0f0f0;display:flex;flex-direction:column;align-items:center;justify-content:space-between;padding:4px 0}.sb b{width:16px;height:17px;background:#cdcdcd;margin-top:30px}
input{height:20px;border:0;padding:0 1px 3px;background:#343436;width:100%;font:inherit;color:#f0f0f0}`,
`<div class="g"><i></i></div><div class="m"><div class="h"><pre>: _CPAGESETUP
Erste Ecke des Fensters:
Eingabe kann nicht erkannt werden. Bitte versuchen Sie es erneut.
Erste Ecke des Fensters:</pre><div class="sb">${ic('up',8)}<b></b>${ic('down',8)}</div></div><input aria-label="Befehl" value="Gegenüberliegende Ecke:"></div>`);

/* property panel */
def('property-panel',`:host{display:flex;flex-direction:column;width:327px;flex:none;background:#fff;border-left:1px solid #777}.top{height:10px;background:#efefef;display:grid;place-items:center}.top i{width:18px;height:2px;background:repeating-linear-gradient(90deg,#444 0 2px,transparent 2px 4px)}
.main{flex:1;display:flex}.p{flex:1;min-width:0}.s{display:flex;height:28px;align-items:center;padding:0 2px 0 5px;gap:1px}cad-select{flex:1;--pl:0px;font-size:11px}.s tool-button{width:24px;height:22px}
table{border-collapse:collapse;table-layout:fixed;width:100%}td,th{height:18px;padding:0 0 0 3px;line-height:14px;text-align:left;font-weight:normal;white-space:nowrap;overflow:hidden;border-bottom:1px solid #dcdcdc}
td.g{padding:0;text-align:center;border:0}th{border-left:1px solid #ddd}td.v{border-left:1px solid #ddd;padding-left:4px}tr.h td,tr.h th{height:17px}tr.h th{background:#d4d4d4;font:bold 11px/14px "Noto Sans",sans-serif;color:#111}
.f{display:flex;align-items:center}.dim{color:#999}.g i{display:inline-block;width:9px;height:9px;border:1px solid #aaa;font:9px/7px "Noto Sans";vertical-align:middle;box-sizing:border-box}.sw{width:13px;height:13px;background:#f00;border:1px solid #600;margin:0 6px 0 2px;box-sizing:border-box}.ln{width:84px;height:1px;background:#111;margin:0 5px 0 2px}
aside{width:48px;background:#eee;display:flex;flex-direction:column;flex:none}aside button{border:0;background:none;height:49px;padding:0;display:grid;place-items:center}aside .on{background:#fff}`,
()=>{const H=t=>`<tr class="h"><td class="g"><i>−</i></td><th colspan="2">${t}</th></tr>`,R=(k,v,d,g)=>`<tr><td class="g">${g?'<i>+</i>':''}</td><th>${k}</th><td class="v ${d?'dim':''}">${v}</td></tr>`;
return `<div class="top"><i></i></div><div class="main"><div class="p"><div class="s"><cad-select label="Auswahl" value="Keine Auswahl"></cad-select><tool-button n="filter"></tool-button><tool-button n="eye" on></tool-button></div>
<table><colgroup><col style="width:17px"><col style="width:94px"><col></colgroup><tbody>${H('Allgemein')}${R('Farbe','<span class="f"><span class="sw"></span>VonLayer</span>')}${R('Layer','Text')}${R('Linientyp','<span class="f"><span class="ln"></span>VonLayer</span>')}${R('Linientypfaktor','1')}${R('Linienstärke','<span class="f"><span class="ln"></span>VonLayer</span>')}${R('Transparenz','VonLayer')}${R('Erhebung','0 mm')}
${H('Ansicht')}${R('Kamera','0, 0, 1',0,1)}${R('Ziel','0, 0, 0',0,1)}${R('Perspektive','Aus')}${R('Brennweite','50 mm')}${R('Blickfeld','39')}${R('Höhe','222.18 mm',1)}${R('Breite','540.1624 mm',1)}${R('Zuschneiden','Aus',1)}${R('Vordere Ebene','1 mm',1)}${R('Hintere Ebene','0 mm',1)}${R('Visueller Stil','2D Drahtmodell',1)}
${H('Verschiedenes')}${R('Beschriftungsskalie','1:1',1)}${R('Standard-Beleuchti','Aus')}</tbody></table></div>
<aside>${['sliders','stack','plan','comps'].map((n,i)=>`<button class="${i?'':'on'}" aria-label="${n}">${ic(n,25)}</button>`).join('')}</aside></div>`});

def('status-bar',`:host{display:flex;height:19px;background:#fff;align-items:center;color:#333;padding-left:2px;white-space:nowrap}span{border-left:1px solid #ccc;padding:0 4px 0 5px}.s{flex:1;border:0;padding:0}.off{color:#bbb}.on b{font-weight:normal;background:#c8c8c8;display:block}cad-icon{margin:0 0 0 7px}u{width:46px;height:12px;flex:none;background:linear-gradient(135deg,transparent 50%,#aaa 50%) right/8px 8px no-repeat}`,
`<span class="s">Bereit</span><span style="border:0">154, 38, 0</span><span>Standard</span><span>Seminar</span><span>Konstruieren</span>${['FANG','RASTER','ORTHO','POLAR','*OFANG','*OTRACK','LST','=P:Layout2','1:1','DBKS','*DYN','QUAD','RT','HKA','UISPERREN'].map(t=>t[0]==='*'?`<span class="on"><b>${t.slice(1)}</b></span>`:t[0]==='='?`<span>${t.slice(1)}</span>`:`<span class="off">${t}</span>`).join('')}<span>Keine</span>${ic('tri',8)}<u></u>`);

/* page setup dialog */
def('page-setup',`:host{display:block;width:811px;background:#fff;border:1px solid #666;box-shadow:3px 4px 14px rgba(0,0,0,.5)}
header{display:flex;height:27px;align-items:center;padding:0 11px 0 9px;gap:7px;font-size:11px}header span{flex:1}header button{border:0;background:none;padding:0;width:24px;margin-left:14px;font-size:14px;display:grid;place-items:center}
.cols{display:grid;grid-template-columns:410px 370px;gap:10px;padding:1px 10px 0;align-items:start}.l,.r{display:flex;flex-direction:column}.row{display:flex}.nm{padding:26px 42px 17px 9px;justify-content:space-between}
.ib{width:22px;height:22px;border:1px solid #999;background:#fff;padding:0;display:grid;place-items:center;flex:none}.ib[disabled]{opacity:.5}
.tb{height:20px;border:1px solid #999;background:#fff;padding:0}.tb[disabled]{color:#888;border-color:#aaa}.in{height:21px;border:1px solid #555;background:#fff;padding:0 6px;min-width:0}
footer{display:flex;gap:12px;padding:23px 10px 11px}footer .tb{width:73px}footer .sp{flex:1}`,
`<header>${ic('logo',12)}<span>Seite einrichten [Layout2]</span><button aria-label="Hilfe">?</button><button aria-label="Schließen">${ic('x',15)}</button></header>
<div class="cols"><div class="l">
<div class="row nm"><span>Name der Seiteneinrichtung:</span><span>&lt;Keine&gt;</span></div>
<group-box label="Drucker / Plotter Konfiguration" style="--pad:6px 14px 6px 8px"><div class="row" style="gap:6px"><cad-select gray label="Drucker" value="ECOSYS P6235cdn" style="flex:1;--pl:1px"></cad-select><button class="ib" aria-label="Eigenschaften">${ic('props',18)}</button></div></group-box>
<group-box label="Papiergröße" style="margin-top:4px;--pad:8px 9px 9px 13px"><div class="row" style="gap:11px"><div style="flex:1"><cad-select gray label="Papier" value="A4" style="width:289px;margin-top:3px;--pl:2px"></cad-select><div class="row" style="justify-content:space-between"><span style="margin-top:10px">210.00 x 297.00</span><button class="tb" disabled style="width:197px;margin-top:17px">Benutzerdefinierte Formate verwalten</button></div><div class="row" style="gap:32px;height:20px;align-items:center;margin-top:3px"><cad-check type="radio" label="Zoll"></cad-check><cad-check type="radio" checked label="Millimeter"></cad-check></div></div>
<svg width="82" height="82" fill="none"><defs><radialGradient id="p"><stop offset="0" stop-color="#fff"/><stop offset="1" stop-color="#8ff4f8"/></radialGradient></defs><rect width="82" height="82" fill="#d4d4d4"/><rect x="14" y="13" width="46" height="65" fill="#e8ecc0"/><rect x="16.500" y="14.500" width="42" height="63" fill="url(#p)" stroke="#555"/><path d="M16 31l42 15-42 14M30.500 36v20" stroke="#444"/><path d="M13 7.500h18M44 7.500h16M66.500 12v26M66.500 56v22" stroke="#111"/><text x="28" y="11" font-size="10" fill="#111">210</text><text transform="translate(63 37) rotate(90)" font-size="11" fill="#111">297</text></svg></div></group-box>
<group-box label="Druck-Bereich" style="margin-top:4px;--pad:6px 9px 10px 13px"><cad-check type="radio" label="Ansicht"></cad-check><cad-check type="radio" label="Grenzen"></cad-check><cad-check type="radio" checked label="Layout"></cad-check><div class="row" style="gap:17px;height:31px;align-items:center"><cad-check type="radio" label="Fenster"></cad-check><button class="ib" disabled aria-label="Fenster wählen">${ic('curs',18)}</button></div></group-box>
<group-box label="Plot-Skalierung" style="margin-top:4px;--pad:6px 14px 13px 13px"><cad-check disabled label="Druckbereich an Seitengröße anpassen"></cad-check>
<group-box label="Skalieren" style="margin-top:5px;--lm:4px;--pad:11px 9px 8px 9px"><cad-select gray label="Maßstab" value="1:1" style="width:178px;--pl:2px"></cad-select><div class="row" style="margin-top:20px;align-items:center"><input class="in" style="width:76px" aria-label="Gedruckte mm" value="1"><span style="width:96px;padding-left:9px;display:flex;justify-content:space-between"><span>Gedruckte mm</span><b style="margin-right:6px">=</b></span><input class="in" style="width:82px" aria-label="Zeichnungseinheiten" value="1"><span style="margin-left:9px">Zeichnungseinheiten</span></div><cad-check label="Linienstärken skalieren" style="margin:15px 0 0 5px"></cad-check></group-box></group-box>
</div><div class="r">
<group-box label="Plotstil Tabelle (Stift Zuordnung)" style="margin-top:11px;--pad:11px 14px 8px"><div class="row"><cad-select gray label="Plotstil" value="Keine (Benutzt die Vorgabe)" style="width:272px;height:23px;--pl:2px"></cad-select><button class="ib" disabled style="margin-left:11px" aria-label="Bearbeiten">${ic('props',18)}</button><button class="ib" style="margin-left:12px" aria-label="Neu">${ic('pageplus',18)}</button></div><cad-check label="Anzeige von Plotstilen" style="margin-top:5px"></cad-check></group-box>
<div class="row" style="gap:11px;margin-top:11px;align-items:flex-start"><group-box label="Zeichnungs-Ausrichtung" style="width:186px;--pad:6px 14px 39px"><cad-check type="radio" label="Hochformat"></cad-check><cad-check type="radio" checked label="Querformat"></cad-check><cad-check label="Drucke von oben nach unten"></cad-check></group-box>
<group-box label="Ursprung des Plot" style="flex:1;--pad:6px 10px 16px 13px"><cad-check disabled label="Auf Seite zentrieren" style="margin-left:11px"></cad-check><label class="row" style="align-items:center"><span style="width:11px">X:</span><input class="in" style="width:110px" value="0"><span style="margin-left:5px">mm</span></label><label class="row" style="align-items:center;margin-top:6px"><span style="width:11px">Y:</span><input class="in" style="width:110px" value="0"><span style="margin-left:5px">mm</span></label></group-box></div>
<group-box label="Plot-Optionen" style="margin-top:10px;--pad:6px 14px 37px"><cad-check checked label="Plotte Objekt Linienstärken"></cad-check><cad-check checked label="Plotten mit Plotstilen"></cad-check><cad-check label="Plotte Transparenzen"></cad-check><cad-check checked label="Plotte Papierbereich zuletzt"></cad-check><cad-check label="Papierbereich Objekte ausblenden"></cad-check></group-box>
<group-box label="Schattierte Ansichtsfenster Optionen" style="margin-top:4px;--pad:11px 14px 14px"><div class="row" style="align-items:center;height:20px"><span style="width:112px;text-align:center;padding-left:10px">Schattierter Plot</span><cad-select dark label="Schattierter Plot" style="width:203px;height:20px"></cad-select></div><div class="row" style="align-items:center;margin-top:11px;color:#aaa;height:20px"><span style="width:112px;text-align:center;padding-left:10px">Qualität</span><cad-select dark label="Qualität" style="width:106px;height:20px"></cad-select><span style="width:38px;text-align:center">DPI</span><input class="in" disabled aria-label="DPI" style="width:60px;background:#eee;border-color:#ccc"></div></group-box>
</div></div>
<footer><button class="tb">Voransicht</button><span class="sp"></span><button class="tb">OK</button><button class="tb">Abbrechen</button></footer>`);

def('mouse-pointer',':host{display:block;pointer-events:none}','<svg width="14" height="20"><path d="M1 1v15l4-4 3 6 3-1-3-6h5z" fill="#fff" stroke="#555"/></svg>');

def('cad-app',`:host{display:flex;flex-direction:column;height:100vh;padding:0 4px 2px;position:relative}.mid{flex:1;min-height:0;display:flex}.left{flex:1;min-width:0;display:flex;flex-direction:column}
page-setup{position:absolute;left:552px;top:191px}mouse-pointer{position:absolute;left:722px;top:705px}`,
`<title-bar></title-bar><menu-bar></menu-bar><tool-bars></tool-bars><ribbon-tabs></ribbon-tabs><ribbon-bar></ribbon-bar><div class="mid"><div class="left"><doc-tabs></doc-tabs><drawing-canvas></drawing-canvas><layout-tabs></layout-tabs><command-line></command-line></div><property-panel></property-panel></div><status-bar></status-bar><page-setup></page-setup><mouse-pointer></mouse-pointer>`);
</script>
</body>
</html>
